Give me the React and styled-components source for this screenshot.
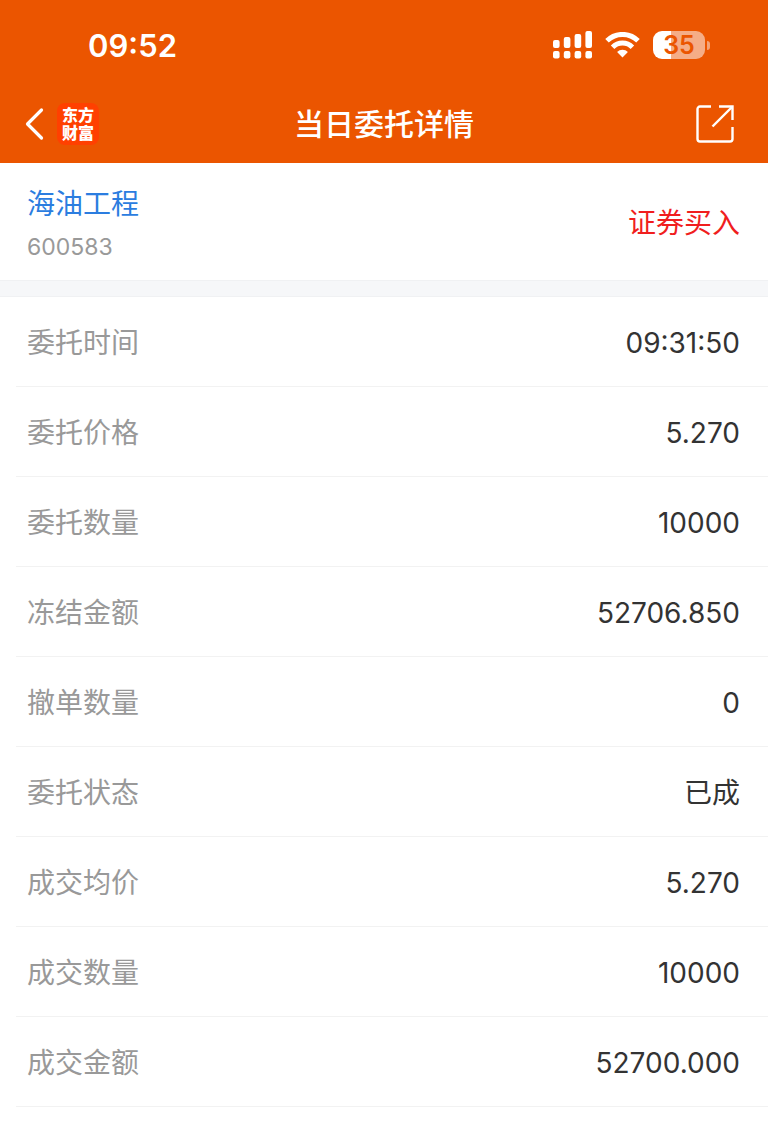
import React from 'react'
import styled, { createGlobalStyle } from "styled-components"

const GlobalStyle = createGlobalStyle`
    * {
        box-sizing: border-box;
    }
    body {
        margin: 0;
        background: #fff;
        color: #333;
        font-family: Inter, "Noto Sans CJK SC", sans-serif;
        font-size: 28px;
        line-height: 40px;
    }
`;

const Header = styled.header`
    padding-bottom: 7px;
    background: #eb5500;
    color: #fff;
`;

const StatusBar = styled.div`
    display: flex;
    align-items: center;
    justify-content: space-between;
    height: 92px;
    padding: 0 58px 0 88px;
`;

const Clock = styled.time`
    font-size: 31px;
    font-weight: 600;
`;

const StatusIcons = styled.div`
    display: flex;
    align-items: center;
    gap: 13px;
    padding-bottom: 2px;
    svg {
        display: block;
    }
`;

const BatteryBox = styled.div`
    display: flex;
    align-items: center;
    gap: 2px;
    &::after {
        content: "";
        width: 3px;
        height: 9px;
        border-radius: 0 4px 4px 0;
        background: #f3a277;
    }
`;

const BatteryLevel = styled.span`
    width: 52px;
    height: 28px;
    border-radius: 9px;
    background: linear-gradient(to right, #fff ${({ $level }) => $level}%, #f5ad87 ${({ $level }) => $level}%);
    color: #eb5500;
    font-size: 25px;
    font-weight: 600;
    line-height: 28px;
    text-align: center;
`;

const NavBar = styled.nav`
    display: grid;
    grid-template-columns: 1fr auto 1fr;
    align-items: center;
    height: 64px;
    padding: 0 24px;
`;

const NavLeft = styled.div`
    display: flex;
    align-items: center;
    gap: 11px;
`;

const IconButton = styled.button`
    display: block;
    padding: 0;
    border: none;
    background: transparent;
    color: inherit;
    cursor: pointer;
    svg {
        display: block;
    }
`;

const ShareButton = styled(IconButton)`
    justify-self: end;
    padding-right: 9px;
`;

const Logo = styled.a`
    display: flex;
    flex-direction: column;
    align-items: center;
    justify-content: center;
    width: 42px;
    height: 42px;
    padding-bottom: 3px;
    border-radius: 8px;
    background: #ff4000;
    color: #fff;
    font-family: "Noto Sans CJK SC", sans-serif;
    font-size: 16px;
    font-weight: 900;
    line-height: 18px;
    text-decoration: none;
`;

const Title = styled.h1`
    margin: 0;
    font-size: 30px;
    font-weight: 500;
`;

const Stock = styled.section`
    display: flex;
    align-items: center;
    justify-content: space-between;
    padding: 17px 28px 14px 27px;
`;

const StockName = styled.a`
    display: block;
    color: #2b7de0;
    line-height: 48px;
    text-decoration: none;
`;

const StockCode = styled.span`
    display: block;
    color: #999;
    font-size: 23px;
    line-height: 38px;
`;

const TradeType = styled.strong`
    color: #f01e1e;
    font-weight: 400;
`;

const Divider = styled.div`
    height: 17px;
    border: solid #f0f1f3;
    border-width: 1px 0;
    background: #f6f7f9;
`;

const DetailList = styled.dl`
    margin: 0 0 0 16px;
`;

const DetailRow = styled.div`
    display: flex;
    align-items: center;
    justify-content: space-between;
    height: 90px;
    padding: 2px 28px 0 11px;
    border-bottom: 1px solid #f2f2f2;
`;

const Label = styled.dt`
    color: #999;
`;

const Value = styled.dd`
    margin: 0;
`;

const details = [
    { label: "委托时间", value: "09:31:50" },
    { label: "委托价格", value: "5.270" },
    { label: "委托数量", value: "10000" },
    { label: "冻结金额", value: "52706.850" },
    { label: "撤单数量", value: "0" },
    { label: "委托状态", value: "已成" },
    { label: "成交均价", value: "5.270" },
    { label: "成交数量", value: "10000" },
    { label: "成交金额", value: "52700.000" },
]

const SignalIcon = () => (
    <svg width="39" height="28" viewBox="0 0 39 28" fill="#fff" aria-hidden="true">
        <rect x="0" y="9" width="6.6" height="8" rx="2" />
        <rect x="10.800" y="6" width="6.600" height="11" rx="2" />
        <rect x="21.600" y="3" width="6.600" height="14" rx="2" />
        <rect x="32.400" y="0" width="6.600" height="17" rx="2" />
        <rect x="0" y="20" width="6.600" height="7.500" rx="2" />
        <rect x="10.800" y="20" width="6.600" height="7.500" rx="2" />
        <rect x="21.600" y="20" width="6.600" height="7.500" rx="2" />
        <rect x="32.400" y="20" width="6.600" height="7.500" rx="2" />
    </svg>
)

const WifiIcon = () => (
    <svg width="35" height="26" viewBox="0 0 35 26" fill="none" stroke="#fff" strokeWidth="5" aria-hidden="true">
        <path d="M2 8.800a22 22 0 0 1 31 0" />
        <path d="M7.600 15.200a14 14 0 0 1 19.800 0" />
        <path d="M17.500 25.500l-5.400-5.400a7.600 7.600 0 0 1 10.800 0z" fill="#fff" stroke="none" />
    </svg>
)

const BackIcon = () => (
    <svg width="22" height="34" viewBox="0 0 22 34" fill="none" stroke="#fff" strokeWidth="3.2" strokeLinecap="round" strokeLinejoin="round">
        <path d="M17.500 3L3.500 17l14 14" />
    </svg>
)

const ShareIcon = () => (
    <svg width="40" height="40" viewBox="0 0 40 40" fill="none" stroke="#fff" strokeWidth="2.4">
        <path d="M16 2.500H5a2.500 2.500 0 0 0-2.500 2.500v30a2.500 2.500 0 0 0 2.500 2.500h30a2.500 2.500 0 0 0 2.500-2.500V23" />
        <path d="M24 2.500h13.500V16" />
        <path d="M37 3L17.500 22.500" />
    </svg>
)

const App = () => {
    return (
        <>
            <GlobalStyle />
            <Header>
                <StatusBar>
                    <Clock>09:52</Clock>
                    <StatusIcons>
                        <SignalIcon />
                        <WifiIcon />
                        <BatteryBox>
                            <BatteryLevel $level={35}>35</BatteryLevel>
                        </BatteryBox>
                    </StatusIcons>
                </StatusBar>
                <NavBar>
                    <NavLeft>
                        <IconButton type="button" aria-label="返回"><BackIcon /></IconButton>
                        <Logo href="#">
                            <span>东方</span>
                            <span>财富</span>
                        </Logo>
                    </NavLeft>
                    <Title>当日委托详情</Title>
                    <ShareButton type="button" aria-label="分享"><ShareIcon /></ShareButton>
                </NavBar>
            </Header>
            <main>
                <Stock>
                    <div>
                        <StockName href="#">海油工程</StockName>
                        <StockCode>600583</StockCode>
                    </div>
                    <TradeType>证券买入</TradeType>
                </Stock>
                <Divider />
                <DetailList>
                    {details.map(({ label, value }) => (
                        <DetailRow key={label}>
                            <Label>{label}</Label>
                            <Value>{value}</Value>
                        </DetailRow>
                    ))}
                </DetailList>
            </main>
        </>
    )
}

export default App
